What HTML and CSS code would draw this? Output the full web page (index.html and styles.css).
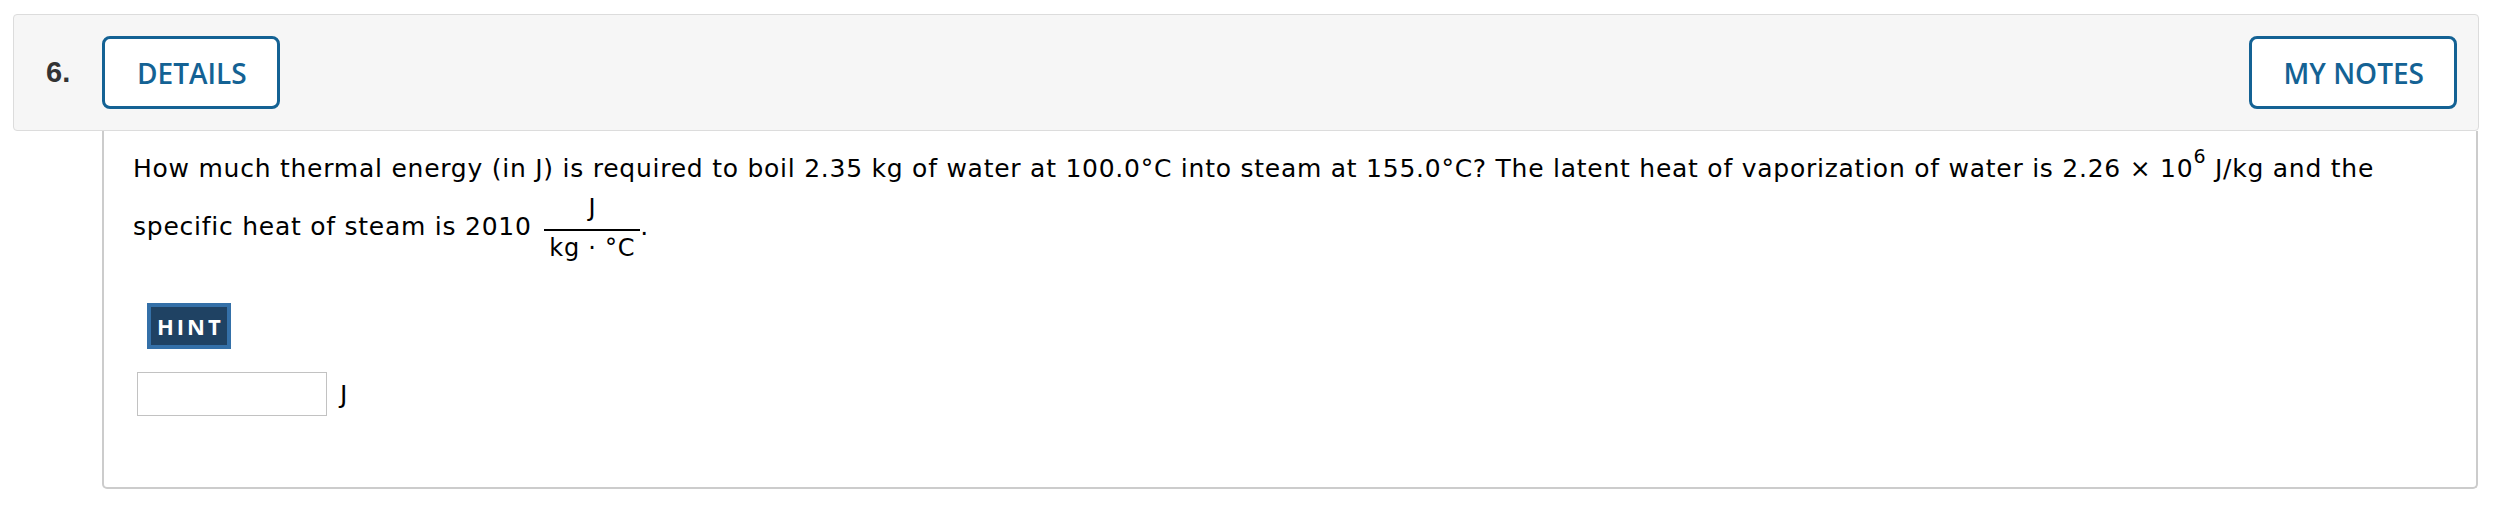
FILE: index.html
```html
<!DOCTYPE html>
<html lang="en">
<head>
<meta charset="utf-8">
<title>Question 6</title>
<link rel="stylesheet" href="styles.css">
</head>
<body>
<div class="question">
  <div class="q-header">
    <span class="q-num">6.</span>
    <button class="q-btn">DETAILS</button>
    <span class="spacer"></span>
    <button class="q-btn">MY NOTES</button>
  </div>
  <div class="q-body">
    <p class="q-text">How much thermal energy (in J) is required to boil 2.35 kg of water at 100.0°C into steam at 155.0°C? The latent heat of vaporization of water is 2.26 × 10<span class="sup">6</span> J/kg and the specific heat of steam is 2010 <span class="frac"><span class="num">J</span><span class="den">kg · °C</span></span>.</p>
    <div class="hint-row"><button class="hint">HINT</button></div>
    <div class="answer-row">
      <input class="answer" type="text" aria-label="answer">
      <span class="unit">J</span>
    </div>
  </div>
</div>
</body>
</html>
```

FILE: styles.css
```css
html, body {
  margin: 0;
  padding: 0;
  background: #ffffff;
}

.question {
  margin: 14px 19px 0 13px;
}

.q-header {
  display: flex;
  align-items: center;
  height: 115px;
  padding: 0 21px 0 32px;
  background: #f6f6f6;
  border: 1px solid #dcdcdc;
  border-radius: 4px;
}

.q-num {
  font-family: "Liberation Sans", Arial, sans-serif;
  font-weight: 700;
  font-size: 29px;
  color: #333333;
  width: 56px;
}

.spacer {
  flex: 1;
}

.q-btn {
  height: 73px;
  padding: 0 30px 0 32px;
  background: #ffffff;
  border: 3px solid #146294;
  border-radius: 8px;
  font-family: "Open Sans", sans-serif;
  font-weight: 600;
  font-size: 28px;
  color: #146294;
}

.q-body {
  margin-left: 89px;
  margin-right: 1px;
  padding: 18px 36px 71px 29px;
  border: 2px solid #cccccc;
  border-top: none;
  border-radius: 0 0 5px 5px;
}

.q-text {
  margin: 0;
  font-family: "DejaVu Sans", Verdana, sans-serif;
  font-size: 25px;
  letter-spacing: 0.75px;
  line-height: 40px;
  color: #000000;
}

.sup {
  font-size: 19px;
  line-height: 0;
  vertical-align: 14px;
}

.frac {
  display: inline-block;
  text-align: center;
  vertical-align: -21px;
  margin-left: 4px;
}

.num {
  display: block;
  font-size: 24px;
  line-height: 26px;
  padding: 6px 0 8px;
  border-bottom: 2px solid #000000;
}

.den {
  display: block;
  font-size: 24px;
  line-height: 26px;
  padding: 4px 5px 0;
}

.hint-row {
  margin: 42px 0 0 14px;
}

.hint {
  height: 46px;
  padding: 0 3px 0 6px;
  background: #1f4263;
  border: 4px solid #3470a8;
  border-radius: 0;
  font-family: "Open Sans", sans-serif;
  font-weight: 700;
  font-size: 22px;
  letter-spacing: 3px;
  color: #ffffff;
  line-height: 38px;
}

.answer-row {
  display: flex;
  align-items: center;
  gap: 13px;
  margin: 23px 0 0 4px;
}

.answer {
  box-sizing: border-box;
  width: 190px;
  height: 44px;
  margin: 0;
  border: 1px solid #c2c2c2;
  border-radius: 0;
  background: #ffffff;
}

.unit {
  font-family: "DejaVu Sans", Verdana, sans-serif;
  font-size: 25px;
  color: #000000;
}
```
